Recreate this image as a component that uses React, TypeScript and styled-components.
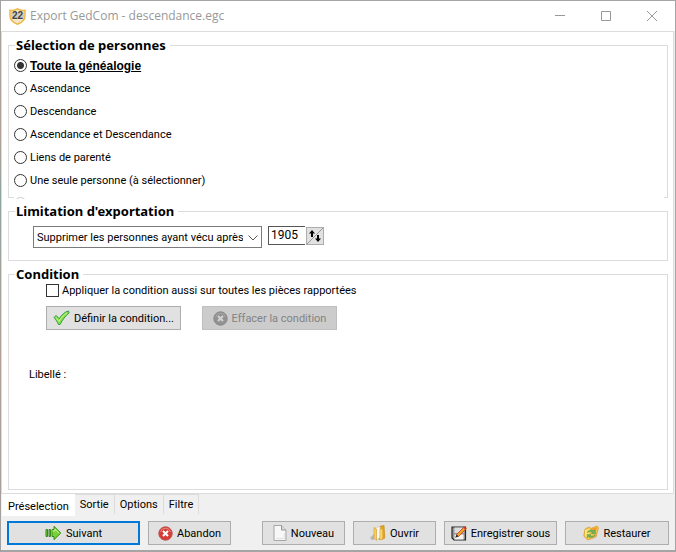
import React, { useState } from "react";
import styled, { createGlobalStyle, css } from "styled-components";

const uiFont = 'Roboto, "Liberation Sans", Arial, sans-serif';
const line = "#dcdcdc";

const GlobalStyle = createGlobalStyle`
  * { box-sizing: border-box; }
  body {
    margin: 0;
    background: linear-gradient(#a3a3a0, #b3a196 25%, #8fa5a0 35%, #b3a196 65%, #a0a0a0);
    font: 11px/13px ${uiFont};
    color: #000;
  }
  button, input, select { font: inherit; color: inherit; margin: 0; }
`;

const Window = styled.main`
  display: flex;
  flex-direction: column;
  min-height: 100vh;
  margin-left: 1px;
  border: solid #a5a5a5;
  border-width: 1px 1px 2px 0;
  background: #f0f0f0;
`;

const TitleBar = styled.header`
  display: flex;
  align-items: center;
  height: 30px;
  padding-left: 8px;
  background: #fff;
  color: #999;
`;

const Title = styled.h1`
  flex: 1;
  margin: 0 0 0 4px;
  font: 12px/16px "Open Sans", "Noto Sans", sans-serif;
`;

const CaptionButton = styled.button`
  display: grid;
  place-items: center;
  width: 46px;
  height: 28px;
  padding: 0;
  border: 0;
  background: none;
`;

const Page = styled.section`
  display: flex;
  flex: 1;
  flex-direction: column;
  gap: 5px;
  margin-right: 1px;
  padding: 5px 5px 3px 6px;
  border: 1px solid ${line};
  background: #fff;
`;

const Group = styled.fieldset<{ $grow?: boolean }>`
  min-width: 0;
  margin: 0;
  padding: 0 3px 0 5px;
  border: 1px solid ${line};
  ${(p) => p.$grow && css`flex: 1;`}
`;

const Legend = styled.legend`
  margin-left: 1px;
  padding: 0 4px 0 1px;
  font: bold 13px/16px "Noto Sans", "Open Sans", sans-serif;
`;

const ScrollArea = styled.div`
  height: 146px;
  margin-bottom: -2px;
  padding-top: 1px;
  overflow: hidden;
  position: relative;
  background: #fff;
`;

const Option = styled.label<{ $selected: boolean }>`
  display: flex;
  align-items: center;
  gap: 3px;
  height: 23px;
  ${(p) =>
    p.$selected &&
    css`
      font: bold 12px/14px "Liberation Sans", Arial, sans-serif;
      text-decoration: underline;
    `}
`;

const Radio = styled.input`
  appearance: none;
  flex: none;
  width: 13px;
  height: 13px;
  border: 1px solid #333;
  border-radius: 50%;
  background: #fff;
  &:checked {
    background: radial-gradient(circle, #333 0 3px, #fff 4px);
  }
  &:disabled { border-color: #ccc; }
`;

const LimitRow = styled.div`
  display: flex;
  align-items: flex-start;
  gap: 6px;
  padding: 7px 0 12px 19px;
`;

const SelectBox = styled.div`
  position: relative;
  width: 229px;
  svg {
    position: absolute;
    top: 9px;
    right: 4px;
    pointer-events: none;
  }
`;

const Select = styled.select`
  appearance: none;
  width: 100%;
  height: 22px;
  padding: 0 18px 0 3px;
  border: 1px solid #7a7a7a;
  border-radius: 0;
  background: #fff;
`;

const Spin = styled.div`
  display: flex;
  align-items: center;
`;

const YearInput = styled.input`
  width: 37px;
  height: 19px;
  padding: 0 2px 1px;
  border: solid #555;
  border-width: 1px 0 1px 1px;
  font-size: 12px;
`;

const SpinButton = styled.button`
  width: 18px;
  height: 18px;
  margin-left: 1px;
  padding: 0;
  border: 1px solid #adadad;
  background: #e1e1e1;
  svg { display: block; }
`;

const CheckLabel = styled.label`
  display: flex;
  align-items: center;
  gap: 3px;
  padding-top: 2px;
  margin-left: 32px;
`;

const Checkbox = styled.input`
  appearance: none;
  flex: none;
  width: 13px;
  height: 13px;
  border: 1px solid #333;
  background: #fff;
  &:checked { background: #333; box-shadow: inset 0 0 0 2px #fff; }
`;

const ConditionActions = styled.div`
  display: flex;
  gap: 21px;
  margin: 9px 0 38px 32px;
`;

const Button = styled.button<{ $width: number; $primary?: boolean }>`
  display: flex;
  align-items: center;
  justify-content: center;
  gap: 4px;
  width: ${(p) => p.$width}px;
  height: 24px;
  padding: 0;
  border: ${(p) => (p.$primary ? "2px solid #0078d7" : "1px solid #adadad")};
  background: #e1e1e1;
  white-space: nowrap;
  svg { flex: none; }
  &:disabled {
    border-color: #bfbfbf;
    background: #ccc;
    color: #838383;
  }
`;

const Caption = styled.p`
  margin: 0 0 0 15px;
`;

const Tabs = styled.nav`
  display: flex;
  align-items: flex-start;
  height: 27px;
  padding-left: 1px;
`;

const Tab = styled.button<{ $active: boolean }>`
  height: 20px;
  padding: 0 5px;
  border: solid ${line};
  border-width: 1px 1px 0 0;
  background: #f0f0f0;
  ${(p) =>
    p.$active &&
    css`
      height: 22px;
      padding: 2px 6px 0;
      border: 0;
      background: #fff;
    `}
`;

const Footer = styled.footer`
  display: flex;
  justify-content: space-between;
  padding: 0 6px 5px 6px;
`;

const FooterGroup = styled.div`
  display: flex;
  gap: 8px;
`;

const ShieldIcon = () => (
  <svg width="17" height="17" viewBox="0 0 17 17" aria-hidden="true">
    <path d="M8.500.8C6 2.400 3.500 2.600 1 2.300v5.500c0 4 3 6.800 7.500 8.500 4.500-1.700 7.500-4.500 7.500-8.500V2.300C13.500 2.600 11 2.400 8.500.8Z" fill="#f3e6c4" stroke="#f0b84c" strokeWidth="1.500" />
    <path d="M2 4.500h13v6.500H2z" fill="#cfccc4" />
    <text x="8.500" y="10.500" textAnchor="middle" fontFamily="Liberation Sans, sans-serif" fontWeight="bold" fontSize="10" fill="#444">22</text>
  </svg>
);

const CheckIcon = () => (
  <svg width="17" height="16" viewBox="0 0 17 16" aria-hidden="true">
    <path d="M1 7.500 3.200 5.500l3 3.300C8.500 5.100 11.500 2 15.500 1l.6 1.800C12.500 6 9.500 9.500 7 14.500H5.500C4.300 12 3 9.500 1 7.500Z" fill="#8be04a" stroke="#2f9b3f" />
    <path d="M3 7.500 6 11.500C8 7.500 11 4.500 14 2.800" fill="none" stroke="#c9f58f" />
  </svg>
);

const CrossIcon = ({ muted }: { muted?: boolean }) => (
  <svg width="15" height="15" viewBox="0 0 15 15" aria-hidden="true">
    <circle cx="7.500" cy="7.500" r="6.700" fill={muted ? "#929292" : "#d63d38"} stroke={muted ? "#898989" : "#b55450"} />
    <path d="M2.500 6a5.200 5.200 0 0 1 10 0" fill="none" stroke={muted ? "#a5a5a5" : "#ec8c85"} />
    <path d="m5 5 5 5M10 5l-5 5" stroke={muted ? "#d2d2d2" : "#fff"} strokeWidth="2" />
  </svg>
);

const ArrowIcon = () => (
  <svg width="17" height="16" viewBox="0 0 17 16" aria-hidden="true">
    <path d="M1 4.500h1.500v7H1zM4 4.500h1.500v7H4zM7 4.500h2V1.300L15.800 8 9 14.700v-3.200H7z" fill="#7bd235" stroke="#35891d" />
    <path d="M7.500 6H10V4l4 4" fill="none" stroke="#c7f291" />
  </svg>
);

const FileIcon = () => (
  <svg width="14" height="16" viewBox="0 0 14 16" aria-hidden="true">
    <path d="M1 .5h7.500l4.500 4.500v10.500H1z" fill="#f7f7f7" stroke="#a5a5a5" />
    <path d="M8.500.5V5H13" fill="#ddd" stroke="#959595" />
    <path d="M3 13.500h8.500V8" fill="none" stroke="#e2e2e2" />
  </svg>
);

const FolderIcon = () => (
  <svg width="16" height="16" viewBox="0 0 16 16" aria-hidden="true">
    <path d="M0 13 4 9v6H2z" fill="#999" opacity=".6" />
    <path d="M9 1.500 14 .5l.8 12.500-2.800 1.500H9z" fill="#e4a51c" stroke="#ca8d1e" strokeWidth=".7" />
    <path d="m5.500 2.500 4.500-1v11L6 15z" fill="#f8f8f8" stroke="#c8c8c8" strokeWidth=".7" />
    <path d="m4 2.500 2.500 1.500V15.300L4 13z" fill="#f4ce62" stroke="#d9a536" strokeWidth=".7" />
    <path d="m10 4.500 2.500-.5v10l-2.500 1z" fill="#f9d777" stroke="#dca739" strokeWidth=".5" />
  </svg>
);

const SaveIcon = () => (
  <svg width="16" height="15" viewBox="0 0 16 15" aria-hidden="true">
    <path d="M1 1h13.500v13H3l-2-2z" fill="#999" stroke="#292929" strokeWidth="1.200" />
    <path d="M3.500 1.500h9V7h-9z" fill="#ddd" />
    <path d="M3.500 8.500h9V13.500h-9z" fill="#f3f3f3" />
    <path d="M5.500 8.500 13.300.8l1.900 1.900L7.500 10.500z" fill="#f5a52b" stroke="#c43719" strokeWidth=".8" />
    <path d="m5.500 8.500 2 2-3.300 1.300z" fill="#222" />
    <path d="m12.300 1.800 1-1 1.900 1.900-1 1z" fill="#de3023" />
  </svg>
);

const RestoreIcon = () => (
  <svg width="16" height="16" viewBox="0 0 16 16" aria-hidden="true">
    <path d="m2 4 4-2 2 1.500L14 1l1.500 1.500L13 12l-8.500 3L.8 11z" fill="#f4c64a" stroke="#d99a34" strokeWidth=".8" />
    <path d="m8 4 6-2-1 4-5 2z" fill="#f19a2c" />
    <path d="M2 5 7 4l-2 9-3-2z" fill="#ffe874" />
    <path d="M4 7.500c2-3 5-3 7-1l1-1.500.5 4-4-.5L10 7.500c-2-1.500-3.500-1-6 0ZM12.500 10c-2 2.500-5 3-7 1.500L4.500 13 4 9.500l4 .3-1.200 1c2 .8 3.500.5 5.700-.8Z" fill="#74b85b" stroke="#469752" strokeWidth=".5" />
  </svg>
);

const choices = [
  "Toute la généalogie",
  "Ascendance",
  "Descendance",
  "Ascendance et Descendance",
  "Liens de parenté",
  "Une seule personne (à sélectionner)",
];

const tabs = ["Préselection", "Sortie", "Options", "Filtre"];

export default function App() {
  const [choice, setChoice] = useState(0);
  const [tab, setTab] = useState(0);
  const [year, setYear] = useState("1905");

  return (
    <>
      <GlobalStyle />
      <Window>
        <TitleBar>
          <ShieldIcon />
          <Title>Export GedCom - descendance.egc</Title>
          <CaptionButton aria-label="Réduire">
            <svg width="10" height="10"><path d="M0 4.500h10" stroke="#999" /></svg>
          </CaptionButton>
          <CaptionButton aria-label="Agrandir">
            <svg width="10" height="10"><path d="M.5.500h9v9h-9z" fill="none" stroke="#999" /></svg>
          </CaptionButton>
          <CaptionButton aria-label="Fermer">
            <svg width="10" height="10"><path d="m0 0 10 10M10 0 0 10" stroke="#999" /></svg>
          </CaptionButton>
        </TitleBar>

        <Page>
          <Group>
            <Legend>Sélection de personnes</Legend>
            <ScrollArea>
              {choices.map((text, i) => (
                <Option key={text} $selected={i === choice}>
                  <Radio type="radio" name="selection" checked={i === choice} onChange={() => setChoice(i)} />
                  {text}
                </Option>
              ))}
              <Option $selected={false}>
                <Radio type="radio" name="selection" aria-label="Autre" disabled />
              </Option>
            </ScrollArea>
          </Group>

          <Group>
            <Legend>Limitation d'exportation</Legend>
            <LimitRow>
              <SelectBox>
                <Select aria-label="Limitation">
                  <option>Supprimer les personnes ayant vécu après</option>
                </Select>
                <svg width="10" height="6"><path d="m.5.500 4.500 4.500L9.500.5" fill="none" stroke="#555" /></svg>
              </SelectBox>
              <Spin>
                <YearInput aria-label="Année" value={year} onChange={(e) => setYear(e.target.value)} />
                <SpinButton aria-label="Modifier l'année" onClick={() => setYear(String(Number(year) + 1))}>
                  <svg width="16" height="16">
                    <path d="M0 16 16 0" stroke="#999" />
                    <path d="M2 5.500 5 2l3 3.500H6V9H4V5.500zM8 10.500h2V7h2v3.500h2L11 14z" fill="#000" />
                  </svg>
                </SpinButton>
              </Spin>
            </LimitRow>
          </Group>

          <Group $grow>
            <Legend>Condition</Legend>
            <CheckLabel>
              <Checkbox type="checkbox" />
              Appliquer la condition aussi sur toutes les pièces rapportées
            </CheckLabel>
            <ConditionActions>
              <Button $width={135}><CheckIcon />Définir la condition...</Button>
              <Button $width={135} disabled><CrossIcon muted />Effacer la condition</Button>
            </ConditionActions>
            <Caption>Libellé :</Caption>
          </Group>
        </Page>

        <Tabs>
          {tabs.map((name, i) => (
            <Tab key={name} $active={i === tab} onClick={() => setTab(i)}>{name}</Tab>
          ))}
        </Tabs>

        <Footer>
          <FooterGroup>
            <Button $width={133} $primary><ArrowIcon />Suivant</Button>
            <Button $width={83}><CrossIcon />Abandon</Button>
          </FooterGroup>
          <FooterGroup>
            <Button $width={83}><FileIcon />Nouveau</Button>
            <Button $width={83}><FolderIcon />Ouvrir</Button>
            <Button $width={113}><SaveIcon />Enregistrer sous</Button>
            <Button $width={104}><RestoreIcon />Restaurer</Button>
          </FooterGroup>
        </Footer>
      </Window>
    </>
  );
}
